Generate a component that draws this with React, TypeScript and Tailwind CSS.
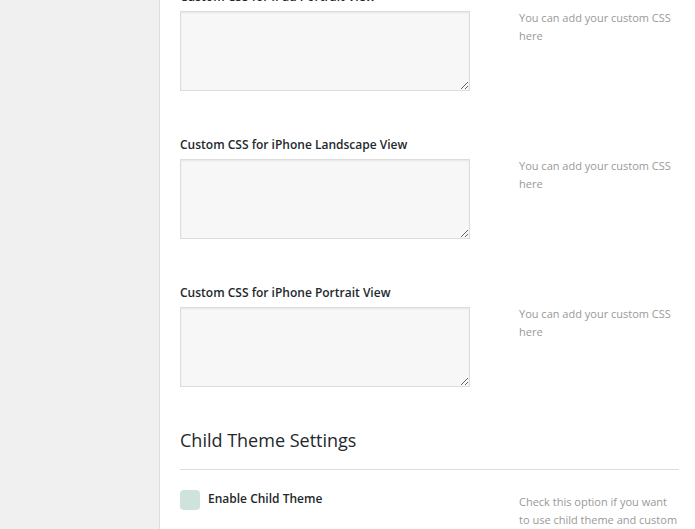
import React from "react";

const font = { fontFamily: '"Open Sans", "Liberation Sans", sans-serif' };

function CssRow({ label }: { label: string }) {
  return (
    <div className="flex">
      <div className="w-[290px] shrink-0">
        <div className="h-[18px] text-[12px] leading-[18px] font-semibold text-[#23282d] mb-[5px] whitespace-nowrap">{label}</div>
        <textarea className="block w-[290px] h-[80px] border border-[#dddddd] bg-[#f7f7f7] shadow-[inset_0_1px_2px_rgba(0,0,0,0.07)] outline-none" />
      </div>
      <div className="ml-[49px] mt-[21px] w-[160px] text-[11px] leading-[18px] text-[#999999]">
        You can add your custom CSS here
      </div>
    </div>
  );
}

export default function App() {
  return (
    <div className="flex w-[695px] h-[529px] overflow-hidden bg-white" style={font}>
      <div className="w-[160px] shrink-0 bg-[#f0f0f0] border-r border-[#dddddd]" />
      <div className="flex-1 min-w-0 pl-[20px] pr-[16px]">
        <div className="mt-[-12px] flex flex-col gap-[45px]">
          <CssRow label="Custom CSS for iPad Portrait View" />
          <CssRow label="Custom CSS for iPhone Landscape View" />
          <CssRow label="Custom CSS for iPhone Portrait View" />
        </div>
        <div className="mt-[41px] text-[18px] leading-[24px] text-[#23282d] h-[24px]">Child Theme Settings</div>
        <div className="mt-[17px] border-t border-[#dddddd]" />
        <div className="flex mt-[20px]">
          <div className="w-[290px] shrink-0 flex items-start">
            <div className="w-[20px] h-[20px] rounded-[4px] bg-[#cfe3dd]" />
            <div className="ml-[8px] text-[12px] leading-[18px] font-semibold text-[#23282d]">Enable Child Theme</div>
          </div>
          <div className="ml-[49px] mt-[3px] w-[160px] text-[11px] leading-[18px] text-[#999999]">
            Check this option if you want to use child theme and custom
          </div>
        </div>
      </div>
    </div>
  );
}
